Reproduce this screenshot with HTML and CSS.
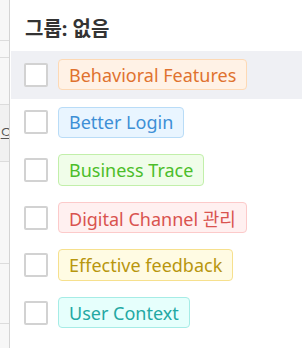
FILE: index.html
```html
<!DOCTYPE html>
<html lang="ko">
<head>
	<meta charset="UTF-8">
	<title>그룹</title>
	<link rel="stylesheet" href="styles.css">
</head>
<body>
	<div class="page">
		<div class="side">
			<div class="side-row h40"></div>
			<div class="side-row h18"></div>
			<div class="side-row h47"></div>
			<div class="side-row h57 shade"><span class="cut">그룹으</span></div>
			<div class="side-row h102"></div>
			<div class="side-row h60"></div>
			<div class="side-row rest"></div>
		</div>
		<div class="panel">
			<div class="title">그룹: 없음</div>
			<ul class="list">
				<li class="row hover"><span class="check"></span><span class="tag orange">Behavioral Features</span></li>
				<li class="row"><span class="check"></span><span class="tag blue">Better Login</span></li>
				<li class="row"><span class="check"></span><span class="tag green">Business Trace</span></li>
				<li class="row"><span class="check"></span><span class="tag red">Digital Channel 관리</span></li>
				<li class="row"><span class="check"></span><span class="tag gold">Effective feedback</span></li>
				<li class="row"><span class="check"></span><span class="tag cyan">User Context</span></li>
			</ul>
		</div>
	</div>
</body>
</html>
```
FILE: styles.css
```css
*{margin: 0;padding: 0;box-sizing: border-box;}
html,body {height: 100%;}
body {font-family: "Noto Sans", "Noto Sans CJK KR", sans-serif;background: #fff;color: #333;}
.page {display: flex;height: 348px;overflow: hidden;}
.side {width: 10px;flex: none;background: #f7f7f7;border-right: 1px solid #d4d4d4;display: flex;flex-direction: column;}
.side-row {border-bottom: 1px solid #dcdcdc;overflow: hidden;}
.side-row.h40 {height: 41px;}
.side-row.h18 {height: 17px;}
.side-row.h47 {height: 47px;}
.side-row.h57 {height: 57px;}
.side-row.h102 {height: 102px;}
.side-row.h60 {height: 60px;}
.side-row.rest {flex: 1;border-bottom: none;}
.shade {background: #f1f1f1;display: flex;align-items: center;justify-content: flex-end;}
.cut {font-size: 14px;color: #555;white-space: nowrap;margin-right: -4px;}
.panel {flex: 1;padding-left: 1px;}
.title {height: 51px;padding: 4px 0 0 14px;display: flex;align-items: center;font-size: 20px;font-weight: bold;color: #333;}
.list {list-style: none;}
.row {height: 47.6px;display: flex;align-items: center;padding-left: 13px;}
.row.hover {background: #eff0f4;}
.check {width: 24px;height: 24px;border: 2px solid #d2d2d2;border-radius: 2px;background: #fff;flex: none;}
.tag {margin-left: 10px;height: 31.4px;display: flex;align-items: center;padding: 0 10px;border: 1px solid;border-radius: 4px;font-size: 18px;white-space: nowrap;}
.orange {background: #fff2e6;border-color: #fdd9b5;color: #e0722f;}
.blue {background: #e9f5ff;border-color: #b9dcf7;color: #3d8fd6;}
.green {background: #f0fde9;border-color: #c2efaa;color: #4cbd2a;}
.red {background: #fff0f0;border-color: #fccaca;color: #d9534f;}
.gold {background: #fffbe3;border-color: #f6e08e;color: #b8960e;}
.cyan {background: #e6fffc;border-color: #a6ece6;color: #23a8a3;}
```
